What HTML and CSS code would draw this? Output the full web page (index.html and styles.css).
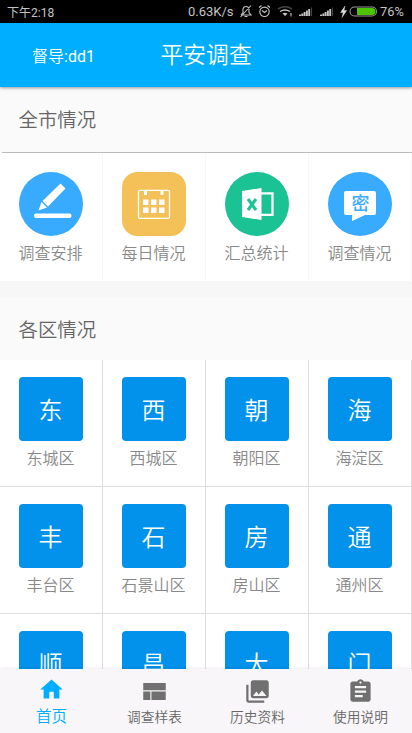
FILE: index.html
```html
<!DOCTYPE html>
<html lang="zh-CN">
<head>
<meta charset="utf-8">
<title>平安调查</title>
<link rel="stylesheet" href="styles.css">
</head>
<body>
<div class="status">
  <span class="time">下午2:18</span>
  <span class="speed">0.63K/s</span>
  <svg class="sicons" width="142" height="23" viewBox="0 0 142 23" fill="none" stroke="#c4c4c4" stroke-width="1.1">
    <path d="M3 15 5 12.500V9q.5-2.500 3-2.500t3 2.500v3.500l2 2.500H3M6.500 16.500h3M2.500 17 13 5.500"/>
    <circle cx="26.500" cy="11.800" r="4.700"/><path d="m24 10.500 2.500 2 2.500-2M21 7.500l2.500-2M32 7.500l-2.500-2"/>
    <path stroke="#444" stroke-width="1.500" d="M40 9q7-4.500 14 0"/>
    <path stroke-width="1.400" d="M42 11.500q5-3 10 0"/><path d="M44.500 13.500q2.500-1.500 5 0l-2.500 2.500z" fill="#c4c4c4" stroke="none"/><path d="M53 13v3.500"/>
    <path stroke-width="1.900" d="M62 16v-1.500M64.300 16v-2.500M66.600 16v-4M68.900 16v-5.500M71.200 16V9M83 16v-1.500M85.300 16v-2.500M87.600 16v-4M89.900 16v-5.500M92.200 16V9"/>
    <path stroke="#444" d="M73.500 16V7.500M94.500 16V7.500"/>
    <path d="m107 6-4.500 6.500h2.700L104 17.500l4.700-7H106z" fill="#ddd" stroke="#ddd" stroke-width=".4"/>
    <rect x="112" y="7" width="26.500" height="9" rx="4.500" stroke="#999"/><path d="M119 8h15a3.500 3.500 0 0 1 0 7h-15z" fill="#4dc400" stroke="none"/>
  </svg>
  <span class="pct">76%</span>
</div>
<header class="bar"><span class="user">督导<i>:dd1</i></span><h1>平安调查</h1></header>
<main>
  <h2 class="city">全市情况</h2>
  <hr>
  <section class="grid menu">
    <div class="cell"><svg width="64" height="64" viewBox="0 0 64 64"><circle cx="32" cy="32" r="32" fill="#38abff"/><g fill="#fff"><path d="m41.500 11.500 5 5L29 34.500l-5.500-5.500z"/><path d="m22.500 30 5.500 5.500-8.500 3z"/><rect x="15" y="41.500" width="37.500" height="4.500" rx="2"/></g></svg><span>调查安排</span></div>
    <div class="cell"><svg width="64" height="64" viewBox="0 0 64 64"><rect width="64" height="64" rx="15.500" fill="#f4c158"/><rect x="16.500" y="18.300" width="31" height="28" rx="1.500" fill="none" stroke="#fff" stroke-width="1.300"/><path fill="#fff" d="M22 18h3v5h-3zM38.500 18h3v5h-3zM21 27.500h5.500V33H21zM29 27.500h5.500V33H29zM37 27.500h5.500V33H37zM21 35.500h5.500V41H21zM29 35.500h5.500V41H29zM37 35.500h5.500V41H37z"/></svg><span>每日情况</span></div>
    <div class="cell"><svg width="64" height="64" viewBox="0 0 64 64"><circle cx="32" cy="32" r="32" fill="#1bc394"/><path fill="#fff" d="m17 19 19.500-3v32L17 45z"/><path d="M36 21.300h11.500v21.500H36" fill="none" stroke="#fff" stroke-width="2.200"/><path d="m23 27 8 11m0-11-8 11" stroke="#1bc394" stroke-width="3"/></svg><span>汇总统计</span></div>
    <div class="cell"><svg width="64" height="64" viewBox="0 0 64 64"><circle cx="32" cy="32" r="32" fill="#38abff"/><path fill="#fff" d="M18 19h28q2 0 2 2v20q0 2-2 2h-9l-13 6v-6h-6q-2 0-2-2V21q0-2 2-2z"/><text class="secret" x="32.500" y="37.500" text-anchor="middle">密</text></svg><span>调查情况</span></div>
  </section>
  <div class="gap"></div>
  <h2 class="area">各区情况</h2>
  <section class="grid districts">
    <div class="cell"><b>东</b><span>东城区</span></div>
    <div class="cell"><b>西</b><span>西城区</span></div>
    <div class="cell"><b>朝</b><span>朝阳区</span></div>
    <div class="cell"><b>海</b><span>海淀区</span></div>
    <div class="cell"><b>丰</b><span>丰台区</span></div>
    <div class="cell"><b>石</b><span>石景山区</span></div>
    <div class="cell"><b>房</b><span>房山区</span></div>
    <div class="cell"><b>通</b><span>通州区</span></div>
    <div class="cell"><b>顺</b></div>
    <div class="cell"><b>昌</b></div>
    <div class="cell"><b>大</b></div>
    <div class="cell"><b>门</b></div>
  </section>
</main>
<nav>
  <a class="on"><svg width="27" height="27" viewBox="0 0 24 24"><path d="M10 20v-6h4v6h5v-8h3L12 3 2 12h3v8z"/></svg><span>首页</span></a>
  <a><svg width="27" height="27" viewBox="0 0 24 24"><path d="M2 4.500h20v6.300H2zM2 12h6.300v7.500H2zM9.300 12H22v7.500H9.300z"/></svg><span>调查样表</span></a>
  <a><svg width="27" height="27" viewBox="0 0 24 24"><path d="M22 16V4c0-1.100-.9-2-2-2H8c-1.100 0-2 .9-2 2v12c0 1.100.9 2 2 2h12c1.100 0 2-.9 2-2zm-11-4 2.030 2.710L16 11l4 5H8l3-4zM2 6v14c0 1.100.9 2 2 2h14v-2H4V6H2z"/></svg><span>历史资料</span></a>
  <a><svg width="27" height="27" viewBox="0 0 24 24"><path d="M19 3h-4.180C14.400 1.840 13.300 1 12 1s-2.400.84-2.820 2H5c-1.100 0-2 .9-2 2v14c0 1.100.9 2 2 2h14c1.100 0 2-.9 2-2V5c0-1.100-.9-2-2-2zm-7 0c.55 0 1 .45 1 1s-.45 1-1 1-1-.45-1-1 .45-1 1-1zm2 14H7v-2h7v2zm3-4H7v-2h10v2zm0-4H7V7h10v2z"/></svg><span>使用说明</span></a>
</nav>
</body>
</html>
```
FILE: styles.css
```css
* { box-sizing: border-box; }
body {
  margin: 0;
  height: 733px;
  overflow: hidden;
  display: flex;
  flex-direction: column;
  background: #fafafa;
  font-family: Roboto, "Noto Sans CJK SC", sans-serif;
  font-weight: 350;
}
h1, h2, b { margin: 0; font-weight: 350; }
i { font-style: normal; font-weight: 400; }
svg { display: block; flex: none; }
.status {
  flex: none;
  height: 23px;
  padding: 0 7px;
  display: flex;
  align-items: center;
  background: #000;
  color: #c4c4c4;
  font-size: 12px;
  font-weight: 400;
  white-space: nowrap;
}
.time { width: 181px; }
.speed { width: 50px; font-size: 13px; }
.pct { font-size: 12.8px; }
.bar {
  flex: none;
  height: 64px;
  padding-left: 32px;
  display: flex;
  align-items: center;
  background: #00aeff;
  color: #fff;
  box-shadow: 0 1px 3px rgba(0, 0, 0, .4);
  z-index: 1;
}
.user { width: 128.5px; font-size: 16px; }
.bar h1 { font-size: 22.8px; line-height: 64px; padding-top: 1px; }
main { flex: 1; min-height: 0; overflow: hidden; }
h2 { padding-left: 18.5px; color: #666; font-size: 19.4px; }
hr { margin: 0 0 0 2px; border: 0; height: 1px; background: #bcbcbc; }
.city { height: 65px; line-height: 68px; }
.area { height: 63px; line-height: 68px; }
.grid { display: grid; grid-template-columns: repeat(4, 103px); background: #fff; }
.menu { height: 128px; }
.cell { display: flex; flex-direction: column; align-items: center; border-right: 1px solid #ddd; }
.cell span { margin-top: 8px; color: #888; font-size: 16px; line-height: 20px; white-space: nowrap; }
.menu .cell { padding: 19px 1px 0 0; border-color: #f7f7f7; }
.secret { fill: #38abff; font-size: 18px; font-weight: 500; }
.gap { height: 16px; background: #f7f7f7; }
.districts { grid-auto-rows: 127px; }
.districts .cell { padding: 17px 1px 0 0; border-bottom: 1px solid #ddd; }
.districts b {
  width: 64px;
  height: 64px;
  flex: none;
  border-radius: 4px;
  background: #0291eb;
  color: #fff;
  font-size: 24px;
  line-height: 68px;
  text-align: center;
}
nav {
  flex: none;
  height: 64px;
  display: grid;
  grid-template-columns: repeat(4, 103px);
  background: #f8f6f8;
  box-shadow: 0 -1px 3px rgba(0, 0, 0, .08);
  z-index: 1;
}
nav a {
  display: flex;
  flex-direction: column;
  align-items: center;
  padding-top: 9px;
  color: #666;
  fill: #707070;
  font-size: 13.7px;
  line-height: 20px;
}
nav span { margin-top: 2px; }
nav .on { padding-top: 7px; color: #00aeff; fill: #00aeff; font-size: 15.6px; }
nav .on span { margin-top: 4px; }
```
